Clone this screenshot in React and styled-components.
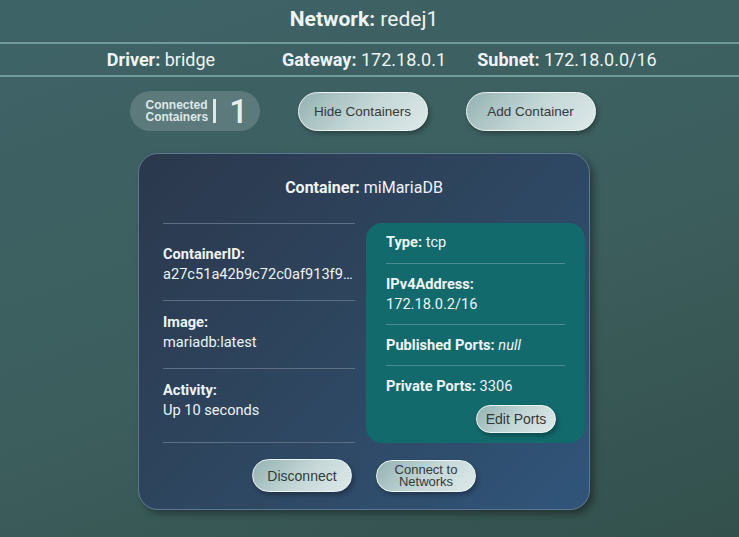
import React from 'react';
import styled, { createGlobalStyle } from 'styled-components';

const GlobalStyle = createGlobalStyle`
  html, body {
    margin: 0;
    padding: 0;
    height: 100%;
  }
  body {
    background: linear-gradient(160deg, #3e6367 0%, #3c5e5d 55%, #33504c 100%);
    font-family: Roboto, "Noto Sans", sans-serif;
    color: #e8efef;
  }
  #root {
    min-height: 100%;
  }
`;

const Page = styled.div`
  min-height: 537px;
  box-sizing: border-box;
`;

const Title = styled.h1`
  margin: 0;
  height: 38px;
  padding: 0 11px 4px 0;
  display: flex;
  align-items: center;
  justify-content: center;
  font-size: 21px;
  font-weight: 400;
  color: #eef3f3;
  border-bottom: 2px solid #6f9a9a;
  b {
    font-weight: 700;
  }
`;

const InfoRow = styled.div`
  height: 31px;
  padding-right: 11px;
  display: grid;
  grid-template-columns: repeat(3, 203px);
  justify-content: center;
  align-items: center;
  font-size: 18px;
  color: #eef3f3;
  border-bottom: 2px solid #6f9a9a;
  span {
    text-align: center;
  }
  b {
    font-weight: 700;
  }
`;

const Toolbar = styled.div`
  margin-top: 14px;
  padding-right: 14px;
  display: flex;
  justify-content: center;
  align-items: center;
  gap: 38px;
`;

const CountPill = styled.div`
  width: 130px;
  height: 40px;
  box-sizing: border-box;
  border-radius: 20px;
  background: rgba(255, 255, 255, 0.16);
  padding-left: 16px;
  display: flex;
  align-items: center;
`;

const CountLabel = styled.div`
  font-family: "Liberation Sans", Arial, sans-serif;
  font-size: 12px;
  font-weight: 700;
  line-height: 12px;
  color: #dfe8e8;
  padding-right: 5px;
  border-right: 3px solid #dfe8e8;
  height: 24px;
  display: flex;
  flex-direction: column;
  justify-content: center;
`;

const CountValue = styled.div`
  margin-left: 13px;
  font-size: 33px;
  font-weight: 500;
  color: #e6eeee;
  line-height: 1;
`;

const PillButton = styled.button`
  width: ${p => p.$w || 130}px;
  height: ${p => p.$h || 39}px;
  border-radius: 999px;
  border: 1px solid #eef4f4;
  background: linear-gradient(135deg, #93b1b1 0%, #c3d6d6 50%, #dde9e9 100%);
  box-shadow: 2px 3px 4px rgba(0, 0, 0, 0.28);
  font-family: "Liberation Sans", Arial, sans-serif;
  font-size: ${p => p.$fs || 13.5}px;
  line-height: ${p => p.$lh || 'normal'};
  color: #333a3a;
  padding: 0 6px;
  cursor: pointer;
`;

const CardArea = styled.div`
  margin-top: 22px;
  padding-right: 11px;
  display: flex;
  justify-content: center;
`;

const Card = styled.div`
  width: 452px;
  height: 357px;
  box-sizing: border-box;
  border-radius: 20px;
  border: 1px solid #5d7792;
  background: linear-gradient(135deg, #2b384c 0%, #2e4660 50%, #30557a 100%);
  box-shadow: 4px 4px 7px rgba(0, 0, 0, 0.35);
  padding: 24px 4px 17px 24px;
  display: flex;
  flex-direction: column;
  font-size: 14.6px;
  color: #eef3f5;
`;

const CardTitle = styled.div`
  height: 20px;
  line-height: 20px;
  font-size: 16px;
  text-align: center;
  padding-right: 20px;
  b {
    font-weight: 700;
  }
`;

const CardBody = styled.div`
  margin-top: 25px;
  display: grid;
  grid-template-columns: 192px 219px;
  column-gap: 11px;
`;

const LeftCol = styled.div`
  border-top: 1px solid #5e6f83;
  border-bottom: 1px solid #5e6f83;
`;

const Field = styled.div`
  padding: ${p => p.$pad};
  line-height: 20px;
  & + & {
    border-top: 1px solid #5e6f83;
  }
  b {
    display: block;
    font-weight: 700;
  }
  span {
    display: block;
    overflow: hidden;
    white-space: nowrap;
    text-overflow: ellipsis;
  }
`;

const PortPanel = styled.div`
  background: #126a6d;
  border-radius: 16px;
  padding: 9px 20px 10px;
  box-sizing: border-box;
  display: flex;
  flex-direction: column;
`;

const PortItem = styled.div`
  padding: ${p => (p.$first ? '0 0 11px' : '10px 0 10px')};
  line-height: 20px;
  border-bottom: ${p => (p.$last ? 'none' : '1px solid #4c8c8e')};
  b {
    font-weight: 700;
  }
  i {
    font-style: italic;
  }
`;

const BlockLabel = styled.b`
  display: block;
`;

const PanelFooter = styled.div`
  display: flex;
  justify-content: flex-end;
  padding-right: 9px;
  margin-top: -1px;
`;

const CardFooter = styled.div`
  margin-top: auto;
  padding-right: 20px;
  display: flex;
  justify-content: center;
  align-items: center;
  gap: 24px;
`;

export default function App() {
  return (
    <Page>
      <GlobalStyle />
      <Title>
        <b>Network:</b>&nbsp;redej1
      </Title>
      <InfoRow>
        <span><b>Driver:</b> bridge</span>
        <span><b>Gateway:</b> 172.18.0.1</span>
        <span><b>Subnet:</b> 172.18.0.0/16</span>
      </InfoRow>
      <Toolbar>
        <CountPill>
          <CountLabel>
            <div>Connected</div>
            <div>Containers</div>
          </CountLabel>
          <CountValue>1</CountValue>
        </CountPill>
        <PillButton>Hide Containers</PillButton>
        <PillButton>Add Container</PillButton>
      </Toolbar>
      <CardArea>
        <Card>
          <CardTitle>
            <b>Container:</b> miMariaDB
          </CardTitle>
          <CardBody>
            <LeftCol>
              <Field $pad="20px 0 16px">
                <b>ContainerID:</b>
                <span>a27c51a42b9c72c0af913f9e4b2d6c8a1f</span>
              </Field>
              <Field $pad="11px 0 16px">
                <b>Image:</b>
                <span>mariadb:latest</span>
              </Field>
              <Field $pad="11px 0 21px">
                <b>Activity:</b>
                <span>Up 10 seconds</span>
              </Field>
            </LeftCol>
            <PortPanel>
              <PortItem $first>
                <b>Type:</b> tcp
              </PortItem>
              <PortItem>
                <BlockLabel>IPv4Address:</BlockLabel>
                172.18.0.2/16
              </PortItem>
              <PortItem>
                <b>Published Ports:</b> <i>null</i>
              </PortItem>
              <PortItem $last>
                <b>Private Ports:</b> 3306
              </PortItem>
              <PanelFooter>
                <PillButton $w={80} $h={28} $fs={14}>Edit Ports</PillButton>
              </PanelFooter>
            </PortPanel>
          </CardBody>
          <CardFooter>
            <PillButton $w={100} $h={33} $fs={14}>Disconnect</PillButton>
            <PillButton $w={100} $h={32} $fs={13} $lh="12px">Connect to Networks</PillButton>
          </CardFooter>
        </Card>
      </CardArea>
    </Page>
  );
}
